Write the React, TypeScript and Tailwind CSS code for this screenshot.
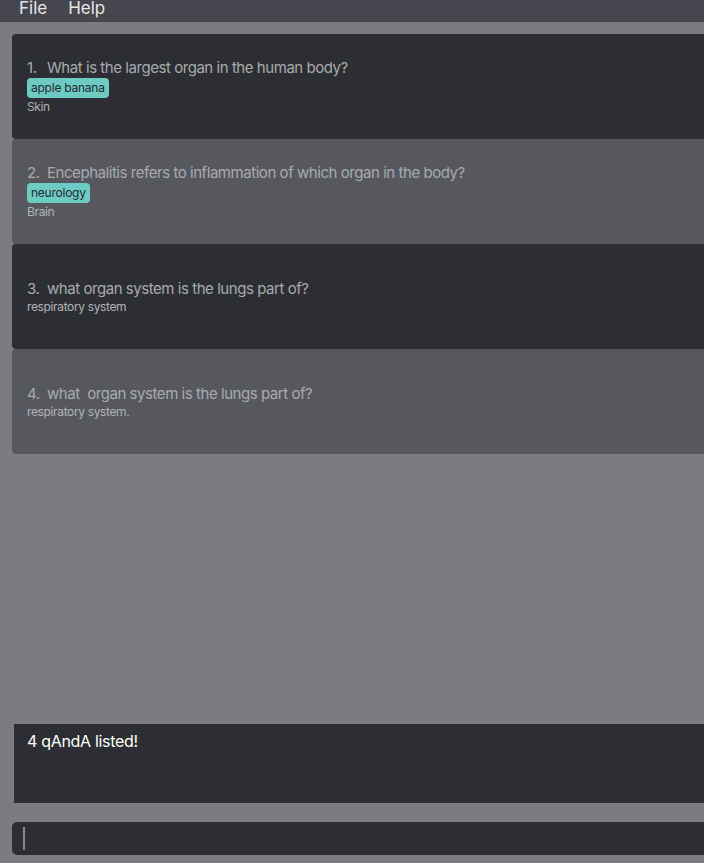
const cards = [
  { q: 'What is the largest organ in the human body?', tags: ['apple banana'], a: 'Skin' },
  { q: 'Encephalitis refers to inflammation of which organ in the body?', tags: ['neurology'], a: 'Brain' },
  { q: 'what organ system is the lungs part of?', tags: [], a: 'respiratory system' },
  { q: 'what  organ system is the lungs part of?', tags: [], a: 'respiratory system.' },
]

const App = () => {
  return (
    <div className="flex h-[863px] w-[704px] flex-col overflow-hidden bg-[#7b7c80] font-['Inter',sans-serif]">
      <div className="flex h-[22px] shrink-0 items-end gap-[21px] bg-[#45464e] pb-[5px] pl-[19px] text-[17px] leading-none text-[#e6e6e8]">
        <span>File</span>
        <span>Help</span>
      </div>
      <div className="flex flex-col pl-3 pt-3">
        {cards.map((c, i) => (
          <div
            key={i}
            className={`flex h-[105px] flex-col justify-center rounded-l-[4px] pl-[15px] ${i % 2 === 0 ? 'bg-[#2d2e33]' : 'bg-[#57585e]'}`}
          >
            <div className="flex whitespace-pre text-[15px] leading-[18px] tracking-[-0.03em] text-[#a9aaae]">
              <span className="w-[20px]">{i + 1}.</span>
              <span>{c.q}</span>
            </div>
            {c.tags.length > 0 && (
              <div className="mt-[1px] flex gap-1">
                {c.tags.map(t => (
                  <span key={t} className="rounded-[4px] bg-[#6dcbc1] px-[4px] py-[2px] text-[12px] leading-[16px] tracking-[-0.02em] text-[#1f2a33]">
                    {t}
                  </span>
                ))}
              </div>
            )}
            <div className="mt-[2px] text-[12px] leading-[14px] tracking-[-0.03em] text-[#b2b3b7]">{c.a}</div>
          </div>
        ))}
      </div>
      <div className="flex-1" />
      <div className="ml-[14px] h-[79px] bg-[#2d2e33] pl-[13px] pt-[7px] text-[16px] leading-[20px] tracking-[-0.02em] text-white">
        4 qAndA listed!
      </div>
      <div className="mb-[8px] ml-3 mt-[19px] flex h-[33px] items-center rounded-l-[5px] bg-[#2d2e33] pl-[11px]">
        <div className="h-[23px] w-[2px] bg-[#8a8b8f]" />
      </div>
    </div>
  )
}

export default App
